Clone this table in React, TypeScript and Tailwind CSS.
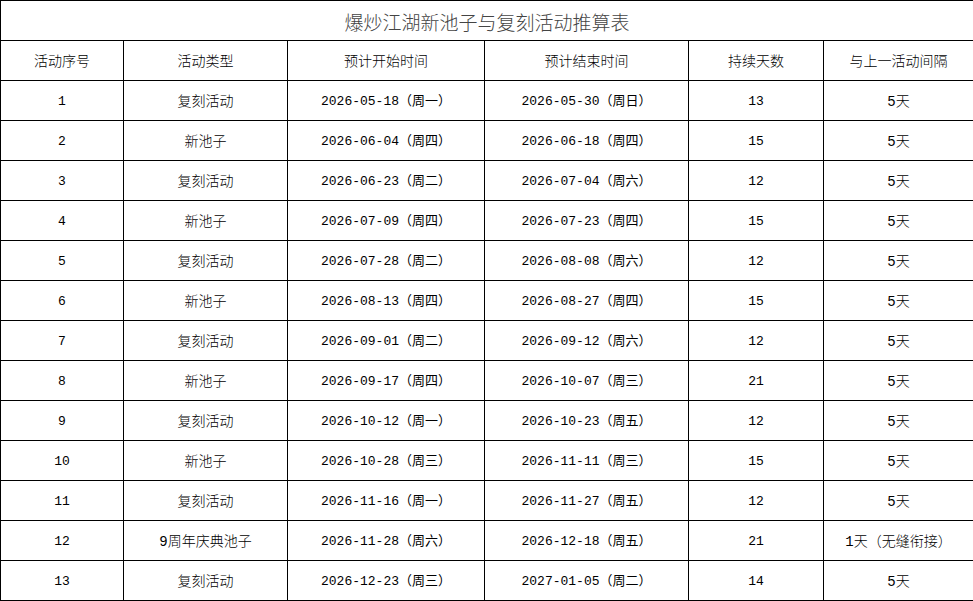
import React from "react"

type Row = {
  id: number
  type: string
  start: string
  end: string
  days: number
  gap: string
}

const rows: Row[] = [
  { id: 1, type: "复刻活动", start: "2026-05-18（周一）", end: "2026-05-30（周日）", days: 13, gap: "5天" },
  { id: 2, type: "新池子", start: "2026-06-04（周四）", end: "2026-06-18（周四）", days: 15, gap: "5天" },
  { id: 3, type: "复刻活动", start: "2026-06-23（周二）", end: "2026-07-04（周六）", days: 12, gap: "5天" },
  { id: 4, type: "新池子", start: "2026-07-09（周四）", end: "2026-07-23（周四）", days: 15, gap: "5天" },
  { id: 5, type: "复刻活动", start: "2026-07-28（周二）", end: "2026-08-08（周六）", days: 12, gap: "5天" },
  { id: 6, type: "新池子", start: "2026-08-13（周四）", end: "2026-08-27（周四）", days: 15, gap: "5天" },
  { id: 7, type: "复刻活动", start: "2026-09-01（周二）", end: "2026-09-12（周六）", days: 12, gap: "5天" },
  { id: 8, type: "新池子", start: "2026-09-17（周四）", end: "2026-10-07（周三）", days: 21, gap: "5天" },
  { id: 9, type: "复刻活动", start: "2026-10-12（周一）", end: "2026-10-23（周五）", days: 12, gap: "5天" },
  { id: 10, type: "新池子", start: "2026-10-28（周三）", end: "2026-11-11（周三）", days: 15, gap: "5天" },
  { id: 11, type: "复刻活动", start: "2026-11-16（周一）", end: "2026-11-27（周五）", days: 12, gap: "5天" },
  { id: 12, type: "9周年庆典池子", start: "2026-11-28（周六）", end: "2026-12-18（周五）", days: 21, gap: "1天（无缝衔接）" },
  { id: 13, type: "复刻活动", start: "2026-12-23（周三）", end: "2027-01-05（周二）", days: 14, gap: "5天" },
]

const headers = ["活动序号", "活动类型", "预计开始时间", "预计结束时间", "持续天数", "与上一活动间隔"]

// thin borders, text sits a touch below centre like the spreadsheet export
const cell = "border border-black text-center align-middle p-0 pt-[2px]"

export default function App() {
  return (
    <div className="bg-white w-[973px] h-[601px] text-black">
      <table
        className="w-[973px] table-fixed border-collapse text-[13px] leading-[16px]"
        style={{ fontFamily: '"Liberation Mono", "Noto Sans CJK SC", monospace' }}
      >
        <colgroup>
          <col className="w-[123px]" />
          <col className="w-[164px]" />
          <col className="w-[197px]" />
          <col className="w-[204px]" />
          <col className="w-[135px]" />
          <col className="w-[150px]" />
        </colgroup>
        <tbody>
          <tr className="h-[40px]">
            <td
              colSpan={6}
              className={`${cell} text-[19px] text-[#444] font-light`}
              style={{ fontFamily: '"Noto Sans CJK SC", sans-serif' }}
            >
              爆炒江湖新池子与复刻活动推算表
            </td>
          </tr>
          <tr className="h-[40px]">
            {headers.map((h) => (
              <td key={h} className={`${cell} text-[14px] font-light`}>
                {h}
              </td>
            ))}
          </tr>
          {rows.map((r) => (
            <tr key={r.id} className="h-[40px]">
              <td className={cell}>{r.id}</td>
              <td className={`${cell} text-[14px] font-light`}>{r.type}</td>
              <td className={cell}>{r.start}</td>
              <td className={cell}>{r.end}</td>
              <td className={cell}>{r.days}</td>
              <td className={`${cell} text-[14px] font-light`}>{r.gap}</td>
            </tr>
          ))}
        </tbody>
      </table>
    </div>
  )
}
